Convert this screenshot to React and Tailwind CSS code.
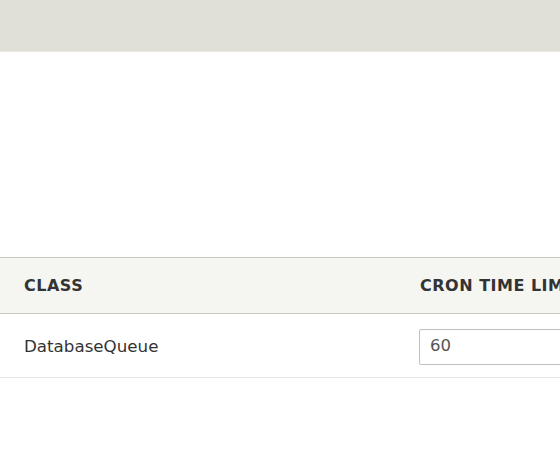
export default function App() {
  return (
    <div className="w-[560px] h-[471px] overflow-hidden bg-white font-['DejaVu_Sans',sans-serif] text-[#333]">
      <div className="h-[52px] bg-[#e0e0d8] border-b border-[#e9e7e0]" />
      <div className="mt-[205px] w-[760px]">
        <div className="grid grid-cols-[396px_1fr] h-[57px] items-center bg-[#f5f5f2] border-y border-[#c9c9c4]">
          <div className="pl-6 pt-[1px] text-[16px] font-bold uppercase tracking-[0.5px]">Class</div>
          <div className="pl-6 pt-[1px] text-[16px] font-bold uppercase tracking-[0.5px]">Cron time limit</div>
        </div>
        <div className="grid grid-cols-[396px_1fr] h-[64px] items-center border-b border-[#e6e4df]">
          <div className="pl-6 pt-[3px] text-[16.7px]">DatabaseQueue</div>
          <div className="pl-[23px] pt-[2px]">
            <div className="w-[200px] h-[36px] border border-[#c0c0bb] rounded-[2px] flex items-center pl-[10px] text-[16.5px] text-[#555]">
              60
            </div>
          </div>
        </div>
      </div>
    </div>
  );
}
